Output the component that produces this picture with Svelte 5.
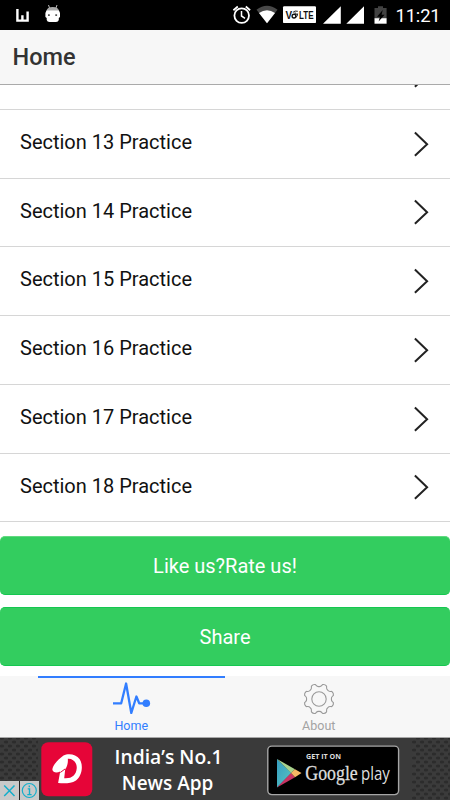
<script>
  const sections = [13, 14, 15, 16, 17, 18];

  function polar(deg, r) {
    const a = (deg * Math.PI) / 180;
    return `${(16 + r * Math.cos(a)).toFixed(2)} ${(16 + r * Math.sin(a)).toFixed(2)}`;
  }

  // Eight rounded teeth separated by shallow scallops
  let gear = `M${polar(14.5, 14.9)}`;
  for (let k = 0; k < 8; k++) {
    const a = 22.5 + k * 45;
    gear += `Q${polar(a, 16)} ${polar(a + 8, 14.9)}`;
    gear += `C${polar(a + 12, 14)} ${polar(a + 10, 12.4)} ${polar(a + 22.5, 12.4)}`;
    gear += `C${polar(a + 35, 12.4)} ${polar(a + 33, 14)} ${polar(a + 37, 14.9)}`;
  }
  gear += 'Z';
</script>

<div class="screen">
  <div class="status">
    <svg width="225" height="30" viewBox="0 0 225 30">
      <path d="M17.4 9V20.6H27.6V11.5M22.4 15.3V20.6" fill="none" stroke="#fff" stroke-width="2.4" />
      <path d="M48.5 5l1.4 4M57 5l-1.4 4" stroke="#bbb" stroke-width="1" />
      <path d="M46.5 11Q47 7 52.7 7T59 11Z" fill="#aaa" />
      <path d="M46.5 10.5H59L60 13V17L58.8 18V20Q58.3 22 56 22H49.5Q47.2 22 46.7 20V18L45.4 17V13Z" fill="#fff" />
      <path d="M48 14.2h1.8v1.8H48zM55.3 14.2h1.8v1.8h-1.8z" fill="#555" />
    </svg>
    <svg width="168" height="30" viewBox="225 0 168 30">
      <g fill="none" stroke="#fff">
        <circle cx="241.7" cy="15.6" r="7.3" stroke-width="1.8" />
        <path d="M241.5 11V16L245 18.3" stroke-width="1.5" />
        <path d="M233.4 10.2L237.8 6.5M245.8 6.5L250.1 10.2" stroke-width="1.8" />
      </g>
      <path d="M256.5 9.8Q267 1.8 277.5 9.8L267 23.3Z" fill="#484848" />
      <path d="M259 13Q267 7.4 275 13L267 23.3Z" fill="#fff" />
      <rect x="283" y="6.3" width="33" height="16.8" rx="1.2" fill="#fff" />
      <g class="volte">
        <text x="285.4" y="18.6" textLength="6.6" lengthAdjust="spacingAndGlyphs">V</text>
        <text x="299" y="18.6" textLength="14.6" lengthAdjust="spacingAndGlyphs">LTE</text>
      </g>
      <g fill="none" stroke="#111">
        <circle cx="294" cy="16.1" r="1.9" stroke-width="1.4" />
        <path d="M295.7 17.6Q298 16 297.6 13.5M292.9 12.4Q294.8 10.3 297.8 11.3M294.3 13Q296.5 12.3 296.4 15" stroke-width=".9" />
      </g>
      <path d="M323 23.7L340.8 6.3V23.7ZM346.3 23.7L364 6.3V23.7Z" fill="#fff" />
      <path d="M374.5 8H378V6.2H383V8H386.6V18.6H374.5Z" fill="#424242" />
      <path d="M374.5 18.2H386.6V23.7H374.5Z" fill="#fff" />
      <path d="M382.7 10L377 16.8H380L378.6 21.5L384.6 14.8H381.6Z" fill="#000" />
    </svg>
    <span class="time">11:21</span>
  </div>

  <header>Home</header>

  <main>
    <div class="row peek">
      <svg width="16" height="26" viewBox="0 0 16 26"><path d="M.9 1.5L13.1 13.2L.9 24.7" /></svg>
    </div>
    {#each sections as n}
      <div class="row">
        <span>Section {n} Practice</span>
        <svg width="16" height="26" viewBox="0 0 16 26"><path d="M.9 1.5L13.1 13.2L.9 24.7" /></svg>
      </div>
    {/each}
    <button>Like us?Rate us!</button>
    <button>Share</button>
  </main>

  <nav>
    <div class="tab active">
      <svg width="40" height="36" viewBox="0 0 40 36">
        <path d="M2 25.3H10.2L15.1 5.5L20.3 35L25.4 18.5L28.2 25.3H35" fill="none" stroke="#327eff" stroke-width="2.3" stroke-linejoin="round" />
        <circle cx="35.3" cy="25.3" r="3.8" fill="#327eff" />
      </svg>
      <span>Home</span>
    </div>
    <div class="tab">
      <svg class="gear" width="32" height="32" viewBox="0 0 32 32">
        <path d={gear} />
        <circle cx="16" cy="16" r="7.2" />
      </svg>
      <span>About</span>
    </div>
  </nav>

  <svg class="ad" width="450" height="63" viewBox="0 737 450 63">
    <defs>
      <pattern id="mesh" width="8" height="8" patternUnits="userSpaceOnUse">
        <rect width="8" height="8" fill="#3b3b3b" />
        <ellipse cx="2" cy="2" rx="2.3" ry="1.6" fill="#2c2c2c" />
        <ellipse cx="6" cy="6" rx="2.3" ry="1.6" fill="#2c2c2c" />
      </pattern>
      <linearGradient id="blue" x2="1" y2="1">
        <stop offset="0" stop-color="#359dc0" />
        <stop offset="1" stop-color="#58c5c2" />
      </linearGradient>
    </defs>
    <rect y="737" width="450" height="63" fill="#3a3a3a" />
    <rect y="738" width="38" height="62" fill="url(#mesh)" />
    <rect x="412" y="738" width="38" height="62" fill="url(#mesh)" />
    <rect y="736" width="450" height="1.8" fill="#c5c5c5" />
    <rect x="41.3" y="742.3" width="51" height="54" rx="7" fill="#e60538" />
    <path d="M63.5 755.4C68 753.2 75.8 753.5 79.7 759.2C83.8 765.8 81.7 776.5 76 780.4C70.5 784 63.3 783.3 58.1 783L60.2 771.5C57 773 53 772.8 52.4 769.8C51.9 766.8 57.5 759.5 63.5 755.4Z" fill="#fff" />
    <path d="M67.8 758.8C72.7 758.3 77.3 762.5 76.7 768.5C76.1 775.3 71.7 778.8 64.2 778.2L65.2 769.3C67.2 766.7 68.2 762.7 67.8 758.8Z" fill="#e60538" />
    <path d="M60.3 772.5L65 769" stroke="#e60538" stroke-width="1" />
    <g class="copy">
      <text x="114.5" y="763.6" textLength="108" lengthAdjust="spacingAndGlyphs">India’s No.1</text>
      <text x="121.8" y="789.6" textLength="91.5" lengthAdjust="spacingAndGlyphs">News App</text>
    </g>
    <rect x="267.8" y="746.1" width="130.8" height="48.5" rx="4" fill="#000" stroke="#a6a6a6" stroke-width="1.4" />
    <path d="M277 759L291.5 773L277 787.5Z" fill="url(#blue)" />
    <path d="M277 759L295 769.2L291.2 773Z" fill="#a8d28d" />
    <path d="M277 787.5L291 773L295 777.2Z" fill="#c93464" />
    <path d="M295 769.2L301.5 773L295 777.2L291 773Z" fill="#f8b765" />
    <text class="get" x="306" y="759.3" textLength="35" lengthAdjust="spacingAndGlyphs">GET IT ON</text>
    <text class="google" transform="translate(305.3 780) scale(.87 1)">Google</text>
    <text class="play" transform="translate(361 780) scale(.79 1)">play</text>
    <rect y="781" width="39" height="19" fill="#c9c9c9" />
    <path d="M19.5 781V800" stroke="#222" stroke-width="1" />
    <g fill="none" stroke="#14aecb" stroke-width="1.5">
      <path d="M4.2 785.5L14.5 796M14.5 785.5L4.2 796" />
      <circle cx="29.3" cy="790.5" r="7" stroke-width="1.2" />
      <path d="M27.7 788.9H29.5V794.5M27.3 794.6H31.6M29.3 785.6V787.2" stroke-width="1.4" />
    </g>
  </svg>
</div>

<style>
  :global(body) {
    margin: 0;
    background: #fff;
  }
  .screen {
    width: 450px;
    height: 800px;
    overflow: hidden;
    display: flex;
    flex-direction: column;
    font-family: Roboto, sans-serif;
    background: #fff;
  }
  svg {
    display: block;
    flex: none;
  }
  .status {
    height: 30px;
    flex: none;
    display: flex;
    background: #000;
    color: #fff;
  }
  .time {
    padding-left: 2.5px;
    font-size: 18.4px;
    line-height: 32px;
    letter-spacing: -0.15px;
  }
  .volte {
    font: bold 10px "Liberation Sans", sans-serif;
    fill: #111;
  }
  header {
    height: 55px;
    flex: none;
    box-sizing: border-box;
    padding-left: 12.5px;
    font-size: 23.5px;
    font-weight: 500;
    line-height: 54px;
    color: #333;
    background: #f7f7f7;
    border-bottom: 1px solid #aaa;
  }
  main {
    height: 591px;
    flex: none;
    overflow: hidden;
  }
  .row {
    height: 68.75px;
    box-sizing: border-box;
    display: flex;
    align-items: center;
    justify-content: space-between;
    padding: 0 20px;
    border-bottom: 1px solid #d6d6d6;
    font-size: 20px;
    color: #111;
  }
  .row span {
    padding-bottom: 3.3px;
  }
  .row path {
    fill: none;
    stroke: #222;
    stroke-width: 2;
  }
  .peek {
    margin-top: -44px;
    justify-content: flex-end;
  }
  button {
    display: block;
    width: 450px;
    height: 59px;
    margin: 14px 0 0;
    padding: 0;
    border: 1px solid #15c750;
    border-width: 1px 0;
    border-top-color: #62d980;
    border-radius: 5px;
    background: #33cd5f;
    color: #fff;
    font: 20px Roboto, sans-serif;
  }
  button + button {
    margin-top: 12px;
    border-top-color: #15c750;
  }
  nav {
    height: 61px;
    flex: none;
    display: flex;
    justify-content: center;
    background: #f7f7f7;
  }
  .tab {
    width: 187.5px;
    height: 61px;
    box-sizing: border-box;
    display: flex;
    flex-direction: column;
    align-items: center;
    color: #a3a3a3;
    font-size: 12.5px;
    line-height: 16px;
  }
  .tab span {
    margin-top: auto;
    padding-bottom: 3px;
  }
  .tab.active {
    border-top: 2px solid #327eff;
    color: #327eff;
  }
  .gear {
    margin-top: 6.7px;
    fill: none;
    stroke: #999;
    stroke-width: 1.1;
  }
  .copy {
    font: 600 19.5px "Open Sans", sans-serif;
    fill: #fff;
  }
  .get {
    font: 700 6.5px "Open Sans", sans-serif;
    fill: #ddd;
  }
  .google {
    font: 20.5px "Liberation Serif", serif;
    fill: #ddd;
    stroke: #ddd;
    stroke-width: 0.3;
  }
  .play {
    font: 19px "Open Sans", sans-serif;
    fill: #ddd;
  }
</style>
